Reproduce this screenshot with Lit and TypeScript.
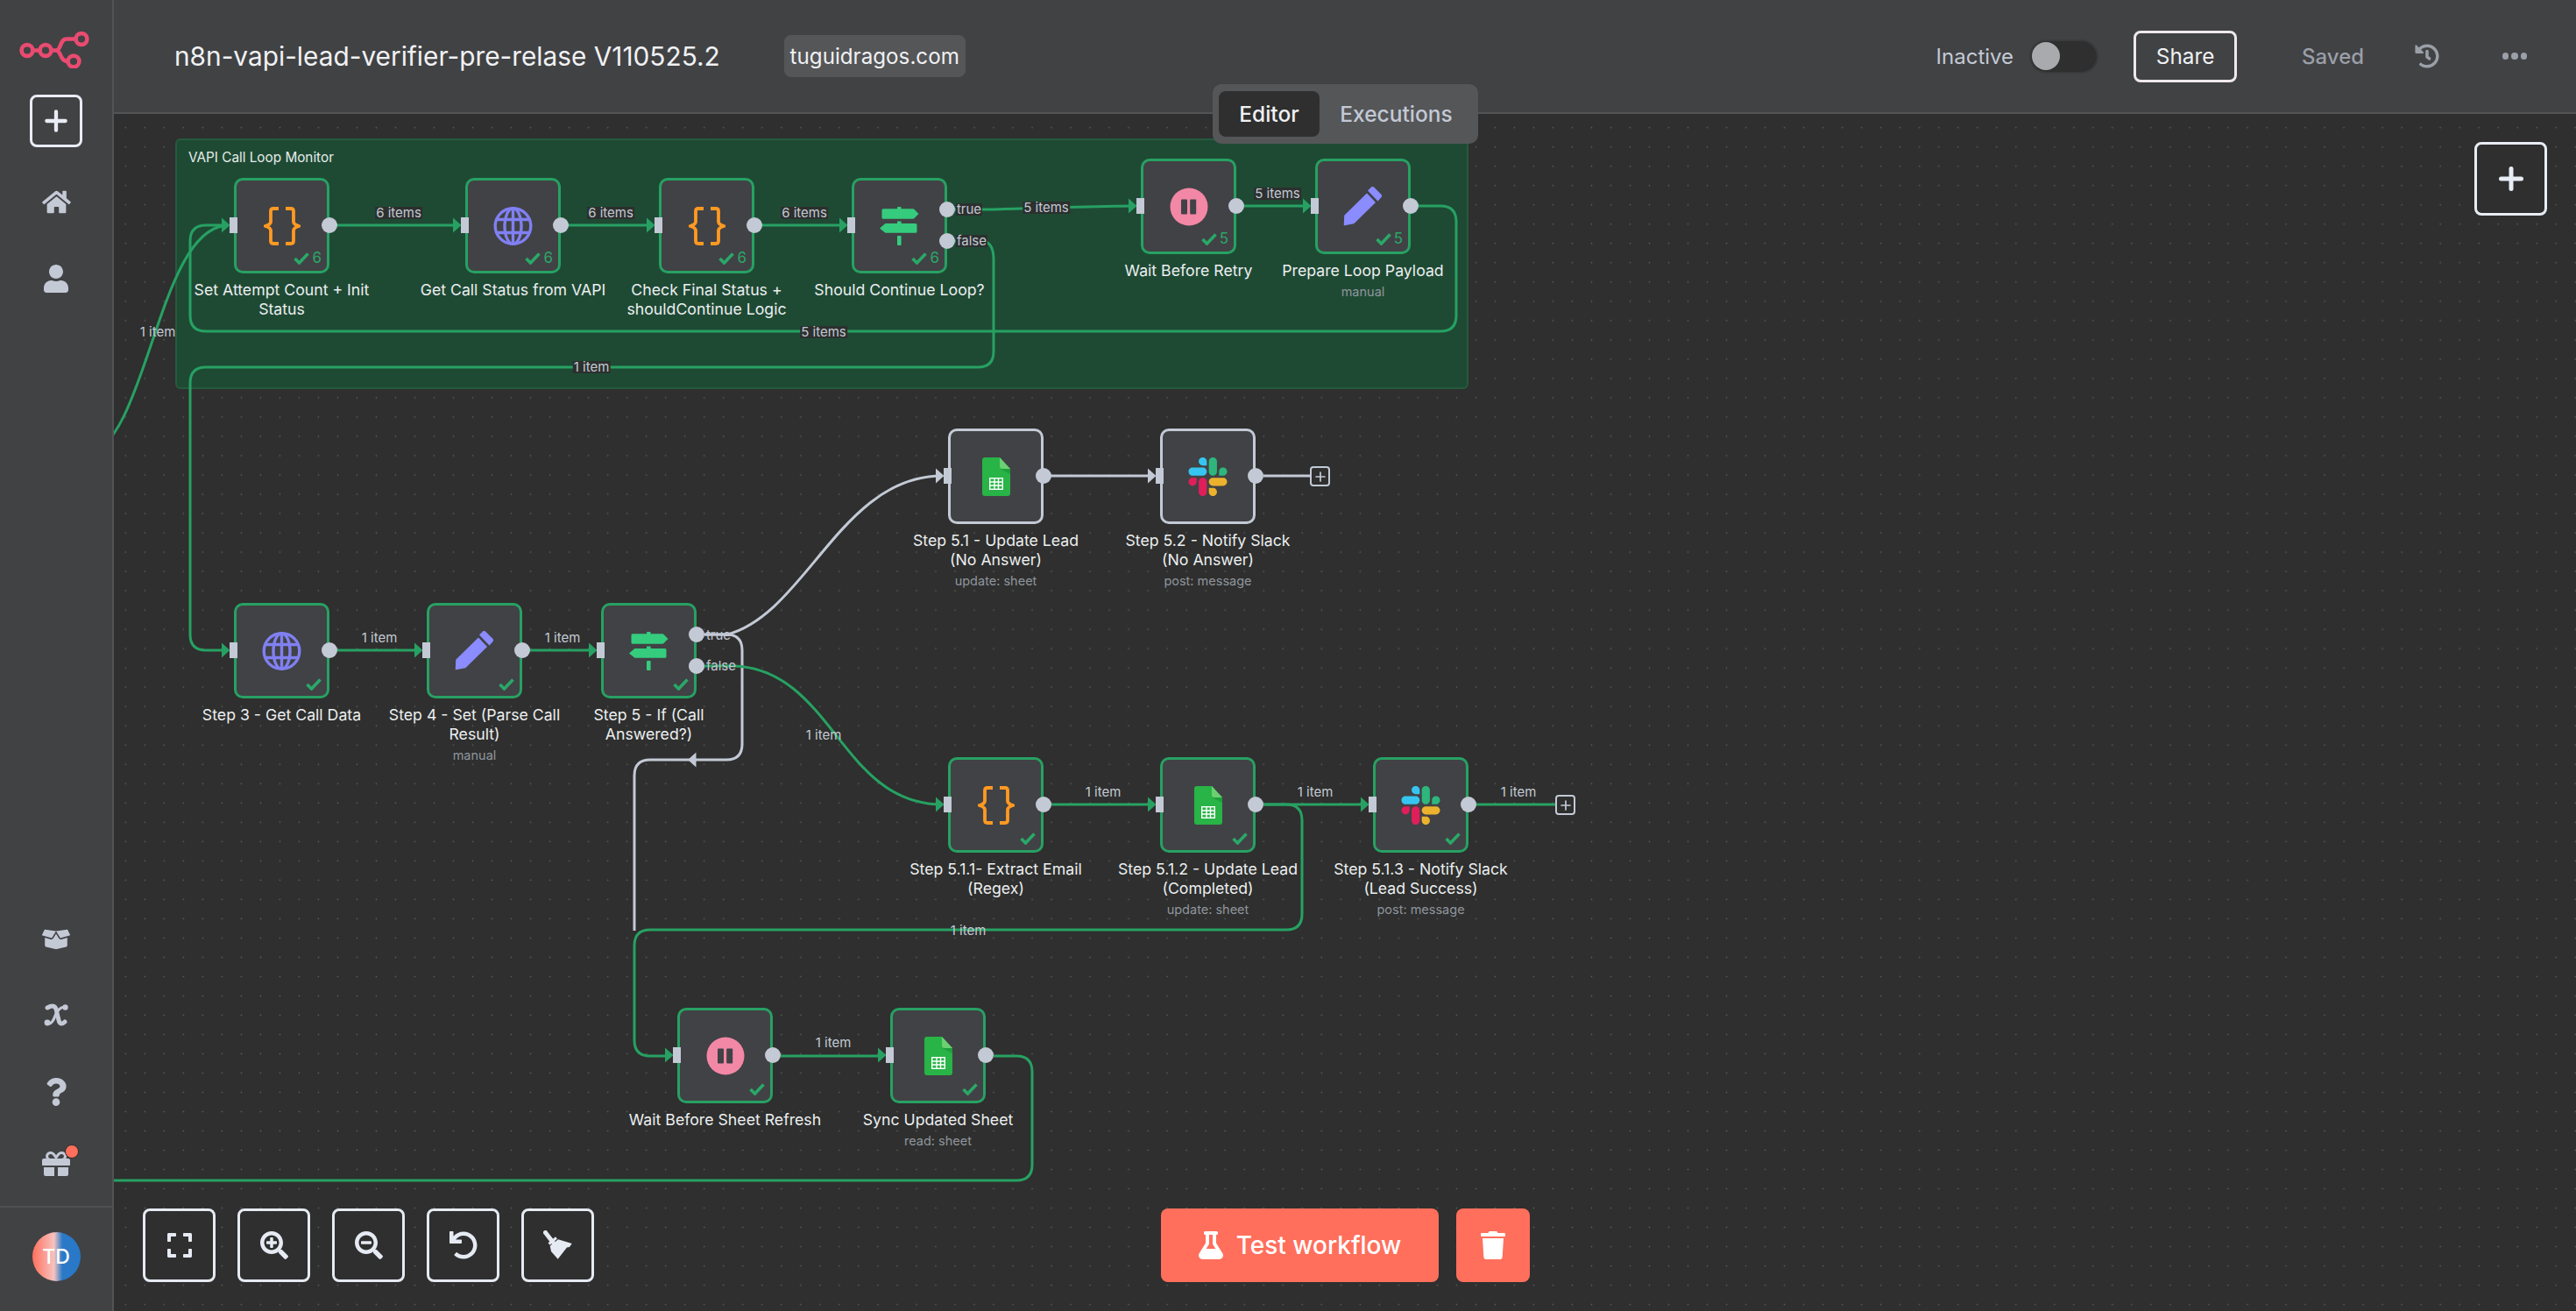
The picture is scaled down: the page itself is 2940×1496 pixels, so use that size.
import { LitElement, html, css, svg } from "lit";
import { customElement } from "lit/decorators.js";

const OX = 130;
const OY = 130;
const GREEN = "#27a163";
const GREY = "#c3c9d5";

type Node = {
  x: number; y: number; icon: string; lines: string[]; sub?: string; count?: string;
  grey?: boolean; outs?: number[]; noCheck?: boolean;
};

const NODES: Node[] = [
  { x: 267, y: 203, icon: "code", count: "6", lines: ["Set Attempt Count + Init", "Status"] },
  { x: 531, y: 203, icon: "globe", count: "6", lines: ["Get Call Status from VAPI"] },
  { x: 752, y: 203, icon: "code", count: "6", lines: ["Check Final Status +", "shouldContinue Logic"] },
  { x: 972, y: 203, icon: "if", count: "6", lines: ["Should Continue Loop?"], outs: [36, 72] },
  { x: 1302, y: 181, icon: "wait", count: "5", lines: ["Wait Before Retry"] },
  { x: 1501, y: 181, icon: "set", count: "5", lines: ["Prepare Loop Payload"], sub: "manual" },
  { x: 267, y: 688, icon: "globe", lines: ["Step 3 - Get Call Data"] },
  { x: 487, y: 688, icon: "set", lines: ["Step 4 - Set (Parse Call", "Result)"], sub: "manual" },
  { x: 686, y: 688, icon: "if", lines: ["Step 5 - If (Call", "Answered?)"], outs: [36, 72] },
  { x: 1082, y: 489, icon: "sheets", grey: true, noCheck: true, lines: ["Step 5.1 - Update Lead", "(No Answer)"], sub: "update: sheet" },
  { x: 1324, y: 489, icon: "slack", grey: true, noCheck: true, lines: ["Step 5.2 - Notify Slack", "(No Answer)"], sub: "post: message" },
  { x: 1082, y: 864, icon: "code", lines: ["Step 5.1.1- Extract Email", "(Regex)"] },
  { x: 1324, y: 864, icon: "sheets", lines: ["Step 5.1.2 - Update Lead", "(Completed)"], sub: "update: sheet" },
  { x: 1567, y: 864, icon: "slack", lines: ["Step 5.1.3 - Notify Slack", "(Lead Success)"], sub: "post: message" },
  { x: 773, y: 1150, icon: "wait", lines: ["Wait Before Sheet Refresh"] },
  { x: 1016, y: 1150, icon: "sheets", lines: ["Sync Updated Sheet"], sub: "read: sheet" },
];

const GREEN_EDGES = [
  "M100 520 C170 500 180 260 260 257",
  "M1618 235 H1644 Q1662 235 1662 253 V360 Q1662 378 1644 378 H235 Q217 378 217 360 V275 Q217 257 235 257 H258",
  "M1090 275 H1122 Q1134 277 1134 296 V401 Q1134 419 1116 419 H235 Q217 419 217 437 V724 Q217 742 235 742 H258",
  "M1090 239 H1130 C1170 238 1250 235 1296 235",
  "M384 257 H523", "M648 257 H744", "M868 257 H964",
  "M1420 235 H1493",
  "M384 742 H479", "M604 742 H678",
  "M804 760 H838 C950 764 960 918 1075 918",
  "M1199 918 H1316", "M1442 918 H1559", "M1684 918 H1776",
  "M1442 918 H1468 Q1486 918 1486 936 V1043 Q1486 1061 1468 1061 H742 Q724 1061 724 1079 V1187 Q724 1205 742 1205 H765",
  "M891 1205 H1008",
  "M1134 1205 H1160 Q1178 1205 1178 1223 V1329 Q1178 1347 1160 1347 H130",
];
const GREY_EDGES = [
  "M804 724 H830 C920 700 960 543 1075 543",
  "M804 724 H829 Q847 724 847 742 V849 Q847 867 829 867 H742 Q724 867 724 885 V1062",
  "M1199 543 H1316", "M1442 543 H1496",
];

const LABELS: [string, number, number, boolean?][] = [
  ["1 item", 180, 379],
  ["6 items", 455, 243, true], ["6 items", 697, 243, true], ["6 items", 918, 243, true],
  ["true", 1106, 239, true], ["false", 1109, 275, true],
  ["5 items", 1194, 237, true], ["5 items", 1458, 221, true], ["5 items", 940, 379, true],
  ["1 item", 675, 419, true],
  ["1 item", 433, 728], ["1 item", 642, 728],
  ["true", 820, 725], ["false", 823, 760],
  ["1 item", 940, 839],
  ["1 item", 1259, 904], ["1 item", 1501, 904], ["1 item", 1733, 904],
  ["1 item", 1105, 1062], ["1 item", 951, 1190],
];

const FA = {
  home: ["0 0 576 512", "M280.37 148.26L96 300.11V464a16 16 0 0 0 16 16l112.06-.29a16 16 0 0 0 15.92-16V368a16 16 0 0 1 16-16h64a16 16 0 0 1 16 16v95.64a16 16 0 0 0 16 16.05L464 480a16 16 0 0 0 16-16V300L295.67 148.26a12.19 12.19 0 0 0-15.3 0zM571.6 251.47L488 182.56V44.05a12 12 0 0 0-12-12h-56a12 12 0 0 0-12 12v72.61L318.47 43a48 48 0 0 0-61 0L4.34 251.47a12 12 0 0 0-1.6 16.9l25.5 31A12 12 0 0 0 45.15 301l235.22-193.74a12.19 12.19 0 0 1 15.3 0L530.9 301a12 12 0 0 0 16.9-1.6l25.5-31a12 12 0 0 0-1.7-16.93z"],
  user: ["0 0 448 512", "M224 256c70.7 0 128-57.3 128-128S294.7 0 224 0 96 57.3 96 128s57.3 128 128 128zm89.6 32h-16.7c-22.2 10.2-46.9 16-72.9 16s-50.6-5.8-72.9-16h-16.7C60.2 288 0 348.2 0 422.4V464c0 26.5 21.5 48 48 48h352c26.5 0 48-21.5 48-48v-41.6c0-74.2-60.2-134.4-134.4-134.4z"],
  question: ["0 0 384 512", "M202.021 0C122.202 0 70.503 32.703 29.914 91.026c-7.363 10.58-5.093 25.086 5.178 32.874l43.138 32.709c10.373 7.865 25.132 6.026 33.253-4.148 25.049-31.381 43.63-49.449 82.757-49.449 30.764 0 68.816 19.799 68.816 49.631 0 22.552-18.617 34.134-48.993 51.164-35.423 19.86-82.299 44.576-82.299 106.405V320c0 13.255 10.745 24 24 24h72.471c13.255 0 24-10.745 24-24v-5.773c0-42.86 125.268-44.645 125.268-160.627C377.504 66.256 286.902 0 202.021 0zM192 373.459c-38.196 0-69.271 31.075-69.271 69.271 0 38.195 31.075 69.27 69.271 69.27s69.271-31.075 69.271-69.271-31.075-69.27-69.271-69.27z"],
  gift: ["0 0 512 512", "M32 448c0 17.7 14.3 32 32 32h160V320H32v128zm256 32h160c17.7 0 32-14.3 32-32V320H288v160zm192-320h-42.1c6.2-12.1 10.1-25.5 10.1-40 0-48.5-39.5-88-88-88-41.6 0-68.5 21.3-103 68.3-34.5-47-61.4-68.3-103-68.3-48.5 0-88 39.5-88 88 0 14.5 3.8 27.9 10.1 40H32c-17.7 0-32 14.3-32 32v80c0 8.8 7.2 16 16 16h480c8.8 0 16-7.2 16-16v-80c0-17.7-14.3-32-32-32zm-326.1 0c-22.1 0-40-17.9-40-40s17.9-40 40-40c19.9 0 34.6 3.3 86.1 80h-86.1zm206.1 0h-87.1c51.4-76.5 65.7-80 86.1-80 22.1 0 40 17.9 40 40s-17.9 40-40 40z"],
  box: ["0 0 640 512", "M425.7 256c-16.9 0-32.8-9-41.4-23.4L320 126l-64.2 106.6c-8.7 14.5-24.6 23.5-41.5 23.5-4.5 0-9-.6-13.3-1.9L64 215v178c0 14.7 10 27.5 24.2 31l216.2 54.1c10.2 2.5 20.9 2.5 31 0L551.8 424c14.2-3.6 24.2-16.4 24.2-31V215l-137 39.1c-4.3 1.3-8.8 1.9-13.3 1.9zm212.6-112.2L586.8 41c-3.1-6.2-9.8-9.8-16.7-8.9L320 64l91.7 152.1c3.8 6.3 11.4 9.3 18.5 7.3l197.9-56.5c9.9-2.9 14.7-13.9 9.9-23.1zM53.2 41L1.7 143.8c-4.8 9.2.1 20.2 9.9 23l197.9 56.5c7.1 2 14.7-1 18.5-7.3L320 64 69.8 32.1c-6.9-.8-13.5 2.7-16.6 8.9z"],
  history: ["0 0 512 512", "M504 255.531c.253 136.64-111.18 248.372-247.82 248.468-59.015.042-113.223-20.53-155.822-54.911-11.077-8.94-11.905-25.541-1.839-35.607l11.267-11.267c8.609-8.609 22.353-9.551 31.891-1.984C173.062 425.135 212.781 440 256 440c101.705 0 184-82.311 184-184 0-101.705-82.311-184-184-184-48.814 0-93.149 18.969-126.068 49.932l50.754 50.754c10.08 10.08 2.941 27.314-11.313 27.314H24c-8.837 0-16-7.163-16-16V38.627c0-14.254 17.234-21.393 27.314-11.314l49.372 49.372C129.209 34.136 189.552 8 256 8c136.81 0 247.747 110.78 248 247.531zm-180.912 78.784l9.823-12.63c8.138-10.463 6.253-25.542-4.21-33.679L288 256.349V152c0-13.255-10.745-24-24-24h-16c-13.255 0-24 10.745-24 24v135.651l65.409 50.874c10.463 8.137 25.541 6.253 33.679-4.21z"],
  flask: ["0 0 448 512", "M437.2 403.5L320 215V64h8c13.3 0 24-10.7 24-24V24c0-13.3-10.7-24-24-24H120c-13.3 0-24 10.7-24 24v16c0 13.3 10.7 24 24 24h8v151L10.8 403.5C-18.5 450.6 15.3 512 70.9 512h306.2c55.7 0 89.4-61.5 60.1-108.5zM137.9 320l48.2-77.6c3.7-5.2 5.8-11.6 5.8-18.4V64h64v160c0 6.9 2.2 13.2 5.8 18.4l48.2 77.6h-172z"],
  trash: ["0 0 448 512", "M432 32H312l-9.4-18.7A24 24 0 0 0 281.1 0H166.8a23.72 23.72 0 0 0-21.4 13.3L136 32H16A16 16 0 0 0 0 48v32a16 16 0 0 0 16 16h416a16 16 0 0 0 16-16V48a16 16 0 0 0-16-16zM53.2 467a48 48 0 0 0 47.9 45h245.8a48 48 0 0 0 47.9-45L416 128H32z"],
  expand: ["0 0 448 512", "M0 180V56c0-13.3 10.7-24 24-24h124c6.6 0 12 5.4 12 12v40c0 6.6-5.4 12-12 12H64v84c0 6.6-5.4 12-12 12H12c-6.6 0-12-5.4-12-12zM288 44v40c0 6.6 5.4 12 12 12h84v84c0 6.6 5.4 12 12 12h40c6.6 0 12-5.4 12-12V56c0-13.3-10.7-24-24-24H300c-6.6 0-12 5.4-12 12zm148 276h-40c-6.6 0-12 5.4-12 12v84h-84c-6.6 0-12 5.4-12 12v40c0 6.6 5.4 12 12 12h124c13.3 0 24-10.7 24-24V332c0-6.6-5.4-12-12-12zM160 468v-40c0-6.6-5.4-12-12-12H64v-84c0-6.6-5.4-12-12-12H12c-6.6 0-12 5.4-12 12v124c0 13.3 10.7 24 24 24h124c6.6 0 12-5.4 12-12z"],
  zoomIn: ["0 0 512 512", "M304 192v32c0 6.6-5.4 12-12 12h-56v56c0 6.6-5.4 12-12 12h-32c-6.6 0-12-5.4-12-12v-56h-56c-6.6 0-12-5.4-12-12v-32c0-6.6 5.4-12 12-12h56v-56c0-6.6 5.4-12 12-12h32c6.6 0 12 5.4 12 12v56h56c6.6 0 12 5.4 12 12zm201 284.7L476.7 505c-9.4 9.4-24.6 9.4-33.9 0L343 405.3c-4.5-4.5-7-10.6-7-17V372c-35.3 27.6-79.7 44-128 44C93.1 416 0 322.9 0 208S93.1 0 208 0s208 93.1 208 208c0 48.3-16.4 92.7-44 128h16.3c6.4 0 12.5 2.5 17 7l99.7 99.7c9.3 9.4 9.3 24.6 0 34zM344 208c0-75.2-60.8-136-136-136S72 132.8 72 208s60.8 136 136 136 136-60.8 136-136z"],
  zoomOut: ["0 0 512 512", "M304 192v32c0 6.6-5.4 12-12 12H124c-6.6 0-12-5.4-12-12v-32c0-6.6 5.4-12 12-12h168c6.6 0 12 5.4 12 12zm201 284.7L476.7 505c-9.4 9.4-24.6 9.4-33.9 0L343 405.3c-4.5-4.5-7-10.6-7-17V372c-35.3 27.6-79.7 44-128 44C93.1 416 0 322.9 0 208S93.1 0 208 0s208 93.1 208 208c0 48.3-16.4 92.7-44 128h16.3c6.4 0 12.5 2.5 17 7l99.7 99.7c9.3 9.4 9.3 24.6 0 34zM344 208c0-75.2-60.8-136-136-136S72 132.8 72 208s60.8 136 136 136 136-60.8 136-136z"],
  undo: ["0 0 512 512", "M212.333 224.333H12c-6.627 0-12-5.373-12-12V12C0 5.373 5.373 0 12 0h48c6.627 0 12 5.373 12 12v78.112C117.773 39.279 184.26 7.47 258.175 8.007c136.906.994 246.448 111.623 246.157 248.532C504.041 393.258 393.12 504 256.333 504c-64.089 0-122.496-24.313-166.51-64.215-5.099-4.622-5.334-12.554-.467-17.42l33.967-33.967c4.474-4.474 11.662-4.717 16.401-.525C170.76 415.336 211.58 432 256.333 432c97.268 0 176-78.716 176-176 0-97.267-78.716-176-176-176-58.496 0-110.28 28.476-142.274 72.333h98.274c6.627 0 12 5.373 12 12v48c0 6.627-5.373 12-12 12z"],
};

function fa(name: keyof typeof FA, w: number, h: number, color: string) {
  const [vb, d] = FA[name];
  return html`<svg viewBox=${vb} width=${w} height=${h} style="display:block;color:${color}"><path fill="currentColor" d=${d}></path></svg>`;
}

function nodeIcon(kind: string) {
  switch (kind) {
    case "code":
      return html`<svg width="42" height="44" viewBox="0 0 42 44" fill="none" stroke="#ff9922" stroke-width="3.8">
        <path d="M17 2 H11 Q8 2 8 5 V17 Q8 20 2 22 Q8 24 8 27 V39 Q8 42 11 42 H17"></path>
        <path d="M25 2 H31 Q34 2 34 5 V17 Q34 20 40 22 Q34 24 34 27 V39 Q34 42 31 42 H25"></path>
      </svg>`;
    case "globe":
      return html`<svg width="45" height="44" viewBox="0 0 45 44" fill="none" stroke="#8080f2" stroke-width="3.4">
        <circle cx="22.5" cy="22" r="20.3"></circle>
        <ellipse cx="22.5" cy="22" rx="9.5" ry="20.3"></ellipse>
        <path d="M22.5 2 V42 M4 14.5 H41 M4 29.5 H41"></path>
      </svg>`;
    case "if":
      return html`<svg width="45" height="44" viewBox="0 0 45 44" fill="#35cc7e">
        <rect x="20" y="0" width="4.6" height="3" rx="1"></rect>
        <path d="M4 2.3 H38 Q39 2.3 39.8 3.2 L44.5 8 L39.8 12.8 Q39 13.7 38 13.7 H4 Q2.5 13.7 2.5 12.2 V3.8 Q2.5 2.3 4 2.3z"></path>
        <rect x="20" y="16.5" width="4.6" height="3"></rect>
        <path d="M41 19 H7 Q6 19 5.2 19.9 L0 24.5 L5.2 28.8 Q6 29.7 7 29.7 H41 Q42.5 29.7 42.5 28.2 V20.5 Q42.5 19 41 19z"></path>
        <rect x="20" y="33" width="4.6" height="11" rx="1"></rect>
      </svg>`;
    case "wait":
      return html`<svg width="44" height="44" viewBox="0 0 44 44">
        <circle cx="22" cy="22" r="21.5" fill="#f387a6"></circle>
        <rect x="13" y="13.5" width="7" height="17" rx="1" fill="#414245"></rect>
        <rect x="23.2" y="13.5" width="7" height="17" rx="1" fill="#414245"></rect>
      </svg>`;
    case "set":
      return html`<svg width="45" height="45" viewBox="0 0 45 45" fill="#8a8cff" stroke="#8a8cff" stroke-width="1.5" stroke-linejoin="round">
        <path d="M1.5 43.5 L2 33 L27 8.5 L36 18 L12 41.5z"></path>
        <path d="M29 4.5 L32.5 1 Q33.5 0.5 34.5 1 L43 9.5 Q43.8 10.5 43 11.5 L39.5 15.5z"></path>
      </svg>`;
    case "sheets":
      return html`<svg width="32" height="44" viewBox="0 0 32 44">
        <path d="M3 0 H20 L32 13 V41 a3 3 0 0 1-3 3 H3 a3 3 0 0 1-3-3 V3 a3 3 0 0 1 3-3z" fill="#28b446"></path>
        <path d="M20.5 13 L32 19 V13z" fill="#1e9e3c"></path>
        <path d="M20 0 L32 13 H23 a3 3 0 0 1-3-3z" fill="#6ccf72"></path>
        <g fill="none" stroke="#fff" stroke-width="1.4">
          <rect x="8.7" y="23.7" width="14.6" height="12.6"></rect>
          <path d="M8.7 28 H23.3 M8.7 32 H23.3 M14 23.7 V36.3 M18.5 23.7 V36.3"></path>
        </g>
      </svg>`;
    default:
      return html`<svg width="45" height="44" viewBox="0 0 122.8 122.8">
        <path d="M25.8 77.6c0 7.1-5.8 12.9-12.9 12.9S0 84.7 0 77.6s5.8-12.9 12.9-12.9h12.9v12.9zm6.5 0c0-7.1 5.8-12.9 12.9-12.9s12.9 5.8 12.9 12.9v32.3c0 7.1-5.8 12.9-12.9 12.9s-12.9-5.8-12.9-12.9V77.6z" fill="#e01e5a"></path>
        <path d="M45.2 25.8c-7.1 0-12.9-5.8-12.9-12.9S38.1 0 45.2 0s12.9 5.8 12.9 12.9v12.9H45.2zm0 6.5c7.1 0 12.9 5.8 12.9 12.9s-5.8 12.9-12.9 12.9H12.9C5.8 58.1 0 52.3 0 45.2s5.8-12.9 12.9-12.9h32.3z" fill="#36c5f0"></path>
        <path d="M97 45.2c0-7.1 5.8-12.9 12.9-12.9s12.9 5.8 12.9 12.9-5.8 12.9-12.9 12.9H97V45.2zm-6.5 0c0 7.1-5.8 12.9-12.9 12.9s-12.9-5.8-12.9-12.9V12.9C64.7 5.8 70.5 0 77.6 0s12.9 5.8 12.9 12.9v32.3z" fill="#2eb67d"></path>
        <path d="M77.6 97c7.1 0 12.9 5.8 12.9 12.9s-5.8 12.9-12.9 12.9-12.9-5.8-12.9-12.9V97h12.9zm0-6.5c-7.1 0-12.9-5.8-12.9-12.9s5.8-12.9 12.9-12.9h32.3c7.1 0 12.9 5.8 12.9 12.9s-5.8 12.9-12.9 12.9H77.6z" fill="#ecb22e"></path>
      </svg>`;
  }
}

const plus = (s: number, w: number) => html`<svg width=${s} height=${s} viewBox="0 0 28 28" fill="none" stroke="currentColor" stroke-width=${w} stroke-linecap="round" style="display:block"><path d="M14 2.5 V25.5 M2.5 14 H25.5"></path></svg>`;

const broom = html`<svg width="34" height="34" viewBox="19 9 34 34" style="display:block">
  <path d="M21.5 11.5 L30 22.5" stroke="#e6eaf2" stroke-width="5" stroke-linecap="round" fill="none"></path>
  <path d="M25.5 24.5 L34 17.5" stroke="#e6eaf2" stroke-width="3" fill="none"></path>
  <path d="M26.7 26.7 L36 19.3 L51.7 24 L49 28 L46 28.5 L35.7 41.7 L28 33z" fill="#e6eaf2"></path>
</svg>`;

const xIcon = html`<svg width="28" height="27" viewBox="20 9 28 27" fill="none" stroke="#c3c9d5" stroke-linecap="round" style="display:block">
  <path d="M24 14 C31 10 34 12 35 20 L37 28 C38 33 41 33 44 30" stroke-width="5"></path>
  <path d="M44 13 C38 13 35 18 33 23 C31 29 28 33 24 32" stroke-width="3.2"></path>
  <circle cx="44.5" cy="13.5" r="3.2" fill="#c3c9d5" stroke="none"></circle>
  <circle cx="24" cy="31" r="3.4" fill="#c3c9d5" stroke="none"></circle>
</svg>`;

@customElement("app-root")
export class AppRoot extends LitElement {
  static styles = css`
    :host { display: grid; grid-template-columns: 130px 1fr; height: 100vh; width: 100vw; overflow: hidden;
      font-family: Inter, "Noto Sans", sans-serif; background: #2e2f2e; color: #eceef0; }
    * { box-sizing: border-box; }
    .side { background: #414244; border-right: 2px solid #525355; display: flex; flex-direction: column; align-items: center; padding-top: 36px; position: relative; z-index: 3; }
    .logo { display: block; margin-left: -4px; }
    .addbox { width: 60px; height: 60px; margin-top: 30px; border: 3px solid #e8ecf4; border-radius: 8px; display: flex; align-items: center; justify-content: center; color: #e8ecf4; }
    .nav { margin-top: 19px; }
    .navitem { width: 100%; height: 87px; display: flex; align-items: center; justify-content: center; position: relative; }
    .navitem.gift { padding-bottom: 10px; }
    .navs { width: 100%; }
    .bottom { margin-top: auto; width: 100%; }
    .reddot { position: absolute; left: 74px; top: 17px; width: 16px; height: 16px; border-radius: 50%; background: #ff6f5c; border: 1px solid #2e2f2e; }
    .foot { border-top: 2px solid #4f5052; height: 120px; width: 100%; display: flex; align-items: center; justify-content: center; padding-bottom: 7px; }
    .avatar { width: 55px; height: 56px; border-radius: 50%; background: linear-gradient(90deg, #ff6f5c 0%, #f6c3c0 45%, #2a7ac8 62%, #2878c8 100%); color: #fff; font-size: 23px; font-weight: 500; display: flex; align-items: center; justify-content: center; }

    .main { display: flex; flex-direction: column; min-width: 0; position: relative; }
    .head { height: 130px; flex: none; background: #414244; border-bottom: 2px solid #525355; display: flex; align-items: center; padding: 0 56px 0 69px; }
    .title { font-size: 29.8px; color: #f0f1f3; white-space: nowrap; }
    .tag { margin-left: 73px; height: 48px; width: 207px; display: flex; align-items: center; justify-content: center; background: #555658; border-radius: 8px; font-size: 24.2px; color: #f0f1f3; }
    .right { margin-left: auto; display: flex; align-items: center; }
    .inactive { font-size: 24px; color: #c3c9d5; margin-right: 18px; }
    .toggle { width: 79px; height: 39px; border-radius: 20px; background: #2e2f2e; border: 2px solid #3a3b3d; padding: 1px; margin-right: 40px; }
    .knob { width: 32px; height: 32px; border-radius: 50%; background: #a8aaad; }
    .share { width: 118px; height: 59px; border: 3px solid #efe9ec; border-radius: 8px; display: flex; align-items: center; justify-content: center; font-size: 24.3px; color: #f0f1f3; margin-right: 74px; }
    .saved { font-size: 24px; font-weight: 500; color: #9a9fa8; margin-right: 58px; }
    .hist { margin-right: 72px; }
    .dots { display: flex; gap: 3px; }
    .dots i { width: 7.3px; height: 7.3px; border-radius: 50%; background: #9a9fa8; display: block; }

    .tabs { position: absolute; left: 1254px; top: 96px; width: 303px; height: 68px; background: #555658; border-radius: 10px; display: flex; align-items: center; padding-left: 7px; z-index: 4; font-size: 24.5px; }
    .tab { height: 52px; display: flex; align-items: center; justify-content: center; border-radius: 8px; font-weight: 500; }
    .tab.on { width: 115px; background: #2e2f2e; color: #f0f1f3; }
    .tab.off { width: 175px; color: #c3c9d5; }

    .canvas { flex: 1; position: relative; overflow: hidden;
      background-color: #2e2f2e;
      background-image: radial-gradient(circle at 11px 11px, #5d5e5e 0.75px, transparent 1.05px);
      background-size: 22.03px 22.03px; background-position: 2.3px 4.7px; }
    .sticky { position: absolute; background: #1e4a34; border: 2px solid #255a3e; border-radius: 6px; font-size: 15.3px; padding: 10px 13px; color: #e6ece8; }
    .edges { position: absolute; left: 0; top: 0; }
    .lbl { position: absolute; transform: translate(-50%, -50%); font-size: 15px; line-height: 14px; color: #c3c9d5; white-space: nowrap; padding: 0 1px; }
    .lbl.dark { background: #2c302e; }
    .node { position: absolute; width: 109px; height: 109px; background: #414245; border: 3px solid #27a163; border-radius: 10px; display: flex; align-items: center; justify-content: center; }
    .node.grey { border-color: #c3c9d5; }
    .inrect { position: absolute; left: -8px; width: 9px; height: 18px; background: #c3c9d5; }
    .out { position: absolute; right: -12px; width: 18px; height: 18px; border-radius: 50%; background: #c3c9d5; }
    .status { position: absolute; right: 6px; bottom: 6px; display: flex; align-items: center; gap: 3px; color: #2aa868; font-size: 17px; line-height: 17px; }
    .cap { position: absolute; top: 114px; left: 50%; transform: translateX(-50%); text-align: center; white-space: nowrap; font-size: 17.7px; line-height: 22px; color: #eceef0; }
    .cap .sub { font-size: 14.5px; color: #90959d; line-height: 26px; }
    .addsm { position: absolute; width: 23px; height: 23px; border: 2px solid #c3c9d5; border-radius: 4px; background: #2e2f2e; color: #c3c9d5; display: flex; align-items: center; justify-content: center; }
    .addbig { position: absolute; left: 2694px; top: 32px; width: 83px; height: 84px; border: 3px solid #e8ecf4; border-radius: 8px; color: #e8ecf4; display: flex; align-items: center; justify-content: center; background: #2e2f2e; }
    .tools { position: absolute; left: 33px; top: 1249px; display: flex; gap: 25px; }
    .tool { width: 83px; height: 84px; border: 3px solid #e6eaf2; border-radius: 8px; background: #2e2f2e; display: flex; align-items: center; justify-content: center; }
    .actions { position: absolute; left: 1195px; top: 1249px; display: flex; gap: 20px; }
    .run { width: 317px; height: 84px; background: #ff6f5c; border-radius: 8px; display: flex; align-items: center; justify-content: center; gap: 15px; color: #fff; font-size: 28px; font-weight: 500; }
    .del { width: 84px; height: 84px; background: #ff6f5c; border-radius: 8px; display: flex; align-items: center; justify-content: center; }
  `;

  private renderNode(n: Node) {
    const outs = n.outs ?? [54];
    return html`<div class="node ${n.grey ? "grey" : ""}" style="left:${n.x - OX}px;top:${n.y - OY}px">
      <div class="inrect" style="top:42px"></div>
      ${outs.map((o) => html`<div class="out" style="top:${o - 12}px"></div>`)}
      ${nodeIcon(n.icon)}
      ${n.noCheck ? "" : html`<div class="status">
        <svg width="18" height="14" viewBox="0 0 18 14" fill="none" stroke="#2aa868" stroke-width="3.6"><path d="M1.5 7 L6.5 12 L16.5 1.5"></path></svg>
        ${n.count ? html`<span>${n.count}</span>` : ""}
      </div>`}
      <div class="cap">
        ${n.lines.map((l) => html`<div>${l}</div>`)}
        ${n.sub ? html`<div class="sub">${n.sub}</div>` : ""}
      </div>
    </div>`;
  }

  render() {
    const arrow = (x: number, y: number, c: string) => svg`<path d="M${x} ${y - 8.5} L${x + 9.5} ${y} L${x} ${y + 8.5}z" fill=${c}></path>`;
    return html`
      <aside class="side">
        <svg class="logo" width="80" height="42" viewBox="0 0 80 42" fill="none" stroke="#ea4b71" stroke-width="4.6">
          <circle cx="9" cy="21.5" r="6.4"></circle>
          <circle cx="30" cy="21.5" r="6.4"></circle>
          <circle cx="71" cy="8.5" r="6.4"></circle>
          <circle cx="62" cy="34" r="6.4"></circle>
          <path d="M15.5 21.5 H23.5 M36.5 21.5 H42 C48 21.5 46 8.5 54 8.5 H64.5 M42 21.5 C48 21.5 46 34 55.5 34"></path>
        </svg>
        <div class="addbox">${plus(26, 4.6)}</div>
        <div class="navs nav">
          <div class="navitem">${fa("home", 33, 29, "#c3c9d5")}</div>
          <div class="navitem">${fa("user", 28, 32, "#c3c9d5")}</div>
        </div>
        <div class="bottom">
          <div class="navitem">${fa("box", 32, 26, "#c3c9d5")}</div>
          <div class="navitem">${xIcon}</div>
          <div class="navitem">${fa("question", 24, 32, "#c3c9d5")}</div>
          <div class="navitem gift">${fa("gift", 32, 32, "#c3c9d5")}<span class="reddot"></span></div>
          <div class="foot"><div class="avatar">TD</div></div>
        </div>
      </aside>
      <div class="main">
        <header class="head">
          <div class="title">n8n-vapi-lead-verifier-pre-relase V110525.2</div>
          <div class="tag">tuguidragos.com</div>
          <div class="right">
            <span class="inactive">Inactive</span>
            <div class="toggle"><div class="knob"></div></div>
            <div class="share">Share</div>
            <span class="saved">Saved</span>
            <span class="hist">${fa("history", 28, 28, "#9a9fa8")}</span>
            <div class="dots"><i></i><i></i><i></i></div>
          </div>
        </header>
        <div class="tabs"><div class="tab on">Editor</div><div class="tab off">Executions</div></div>
        <div class="canvas">
          <div class="sticky" style="left:${200 - OX}px;top:${158 - OY}px;width:1476px;height:286px">VAPI Call Loop Monitor</div>
          <svg class="edges" width="2810" height="1366" viewBox="130 130 2810 1366" fill="none">
            ${GREY_EDGES.map((d) => svg`<path d=${d} stroke=${GREY} stroke-width="3"></path>`)}
            ${GREEN_EDGES.map((d) => svg`<path d=${d} stroke=${GREEN} stroke-width="3"></path>`)}
            ${NODES.map((n) => arrow(n.x - 14, n.y + 54, n.grey ? GREY : GREEN))}
            <path d="M785 867 L794.5 858.5 V875.5z" fill=${GREY}></path>
          </svg>
          ${LABELS.map(([t, x, y, dark]) => html`<div class="lbl ${dark ? "dark" : ""}" style="left:${x - OX}px;top:${y - OY}px">${t}</div>`)}
          ${NODES.map((n) => this.renderNode(n))}
          <div class="addsm" style="left:${1495 - OX}px;top:${532 - OY}px">${plus(12, 4)}</div>
          <div class="addsm" style="left:${1775 - OX}px;top:${907 - OY}px">${plus(12, 4)}</div>
          <div class="addbig">${plus(28, 5)}</div>
          <div class="tools">
            <div class="tool">${fa("expand", 28, 32, "#e6eaf2")}</div>
            <div class="tool">${fa("zoomIn", 32, 32, "#e6eaf2")}</div>
            <div class="tool">${fa("zoomOut", 32, 32, "#e6eaf2")}</div>
            <div class="tool">${fa("undo", 32, 32, "#e6eaf2")}</div>
            <div class="tool">${broom}</div>
          </div>
          <div class="actions">
            <div class="run">${fa("flask", 28, 32, "#fff")}<span>Test workflow</span></div>
            <div class="del">${fa("trash", 28, 32, "#fff")}</div>
          </div>
        </div>
      </div>
    `;
  }
}
